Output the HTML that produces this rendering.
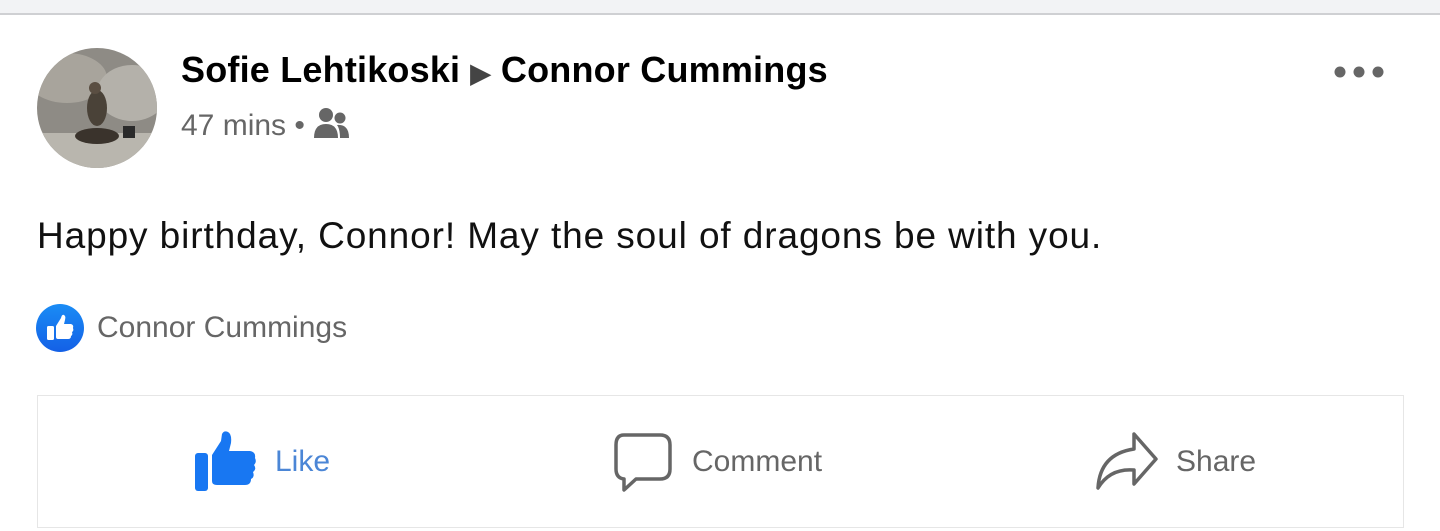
<!DOCTYPE html>
<html><head><meta charset="utf-8"><style>
*{margin:0;padding:0;box-sizing:border-box}
body{width:1440px;height:531px;background:#fff;font-family:"Liberation Sans",sans-serif;position:relative;overflow:hidden}
.top{position:absolute;left:0;top:0;width:1440px;height:15px;background:#f2f3f5;border-bottom:2px solid #cfd0d3}
.av{position:absolute;left:37px;top:48px;width:120px;height:120px;border-radius:50%;overflow:hidden}
.t{position:absolute;white-space:nowrap}
.name{left:181px;top:49px;font-size:36px;font-weight:bold;color:#000;letter-spacing:0.2px}
.time{left:181px;top:107px;font-size:30px;color:#666}
.post{left:37px;top:215px;font-size:37px;color:#111;letter-spacing:0.9px}
.rx{left:97px;top:311px;font-size:30px;color:#666}
.box{position:absolute;left:37px;top:395px;width:1367px;height:133px;border:1px solid #e6e6e6}
.btn{font-size:30px;top:445px}
</style></head><body>
<div class="top"></div>
<div class="av"><svg width="120" height="120" viewBox="0 0 120 120"><rect width="120" height="120" fill="#8e8b85"/><ellipse cx="30" cy="30" rx="40" ry="25" fill="#a8a49c"/><ellipse cx="95" cy="45" rx="35" ry="28" fill="#b4b1aa"/><rect y="85" width="120" height="35" fill="#b9b6ae"/><ellipse cx="60" cy="60" rx="10" ry="18" fill="#4a4238"/><ellipse cx="60" cy="88" rx="22" ry="8" fill="#3a332c"/><circle cx="58" cy="40" r="6" fill="#5a4e42"/><rect x="86" y="78" width="12" height="12" fill="#2a2a2a"/></svg></div>
<div class="t name">Sofie Lehtikoski <span style="font-size:26px;color:#444">▶</span> Connor Cummings</div>
<div class="t time">47 mins • <svg width="36" height="32" viewBox="0 0 36 32" style="vertical-align:-4px"><circle cx="13" cy="8" r="7" fill="#666"/><circle cx="27" cy="11" r="5.5" fill="#666"/><path d="M1 31 Q1 17 13 17 Q25 17 25 31Z" fill="#666"/><path d="M24 18 Q36 17 36 31 L27 31 Q27 22 24 18Z" fill="#666"/></svg></div>
<div class="t post">Happy birthday, Connor! May the soul of dragons be with you.</div>
<svg style="position:absolute;left:36px;top:304px" width="48" height="48" viewBox="0 0 48 48"><defs><linearGradient id="g" x1="0" y1="0" x2="0" y2="1"><stop offset="0" stop-color="#1a8cf5"/><stop offset="1" stop-color="#1460e6"/></linearGradient></defs><circle cx="24" cy="24" r="24" fill="url(#g)"/><rect x="11" y="22" width="7" height="14" rx="1.5" fill="#fff"/><path d="M20 22 L25 14 Q26 10 28 11 Q30 12 29 16 L28 20 L35 20 Q38 21 37 24 Q38 27 36 28 Q37 31 35 32 Q35 35 32 35 L22 35 Q20 35 20 33Z" fill="#fff"/></svg>
<div class="t rx">Connor Cummings</div>
<div class="box"></div>
<svg style="position:absolute;left:195px;top:431px" width="62" height="60" viewBox="0 0 62 60"><rect x="0" y="22" width="13" height="38" rx="3" fill="#1877f2"/><path d="M17 24 L26 10 L27 3 Q29 -1 33 1 Q37 3 36 12 L34 20 L55 20 Q61 21 60 27 Q62 31 59 34 Q62 38 58 41 Q60 46 56 48 Q56 54 50 54 L22 54 Q17 54 17 50Z" fill="#1877f2"/></svg>
<div class="t btn" style="left:275px;color:#4b86d6">Like</div>
<svg style="position:absolute;left:612px;top:432px" width="62" height="62" viewBox="0 0 62 62"><path d="M12 3 L48 3 Q58 3 58 13 L58 37 Q58 47 48 47 L24 47 L12 58 L12 47 Q4 46 4 37 L4 13 Q4 3 12 3Z" fill="none" stroke="#666" stroke-width="3.5" stroke-linejoin="round"/></svg>
<div class="t btn" style="left:692px;color:#666">Comment</div>
<svg style="position:absolute;left:1096px;top:432px" width="64" height="60" viewBox="0 0 64 60"><path d="M2 56 Q4 22 38 17 L38 2 L60 27 L38 52 L38 38 Q14 36 2 56Z" fill="none" stroke="#666" stroke-width="3.5" stroke-linejoin="round"/></svg>
<div class="t btn" style="left:1176px;color:#666">Share</div>
<svg style="position:absolute;left:1334px;top:64px" width="50" height="16" viewBox="0 0 50 16"><circle cx="6" cy="8" r="5.5" fill="#666"/><circle cx="25" cy="8" r="5.5" fill="#666"/><circle cx="44" cy="8" r="5.5" fill="#666"/></svg>
</body></html>
